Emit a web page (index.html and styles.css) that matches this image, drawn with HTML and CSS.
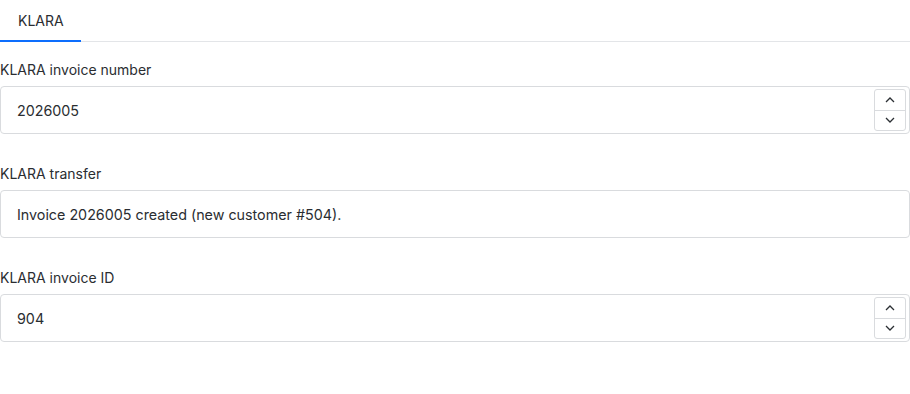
FILE: index.html
```html
<!DOCTYPE html>
<html lang="en">

<head>
    <meta charset="UTF-8" />
    <meta name="viewport" content="width=device-width, initial-scale=1.0" />
    <title>KLARA</title>
    <link rel="stylesheet" href="styles.css">
</head>

<body>
    <div class="tabs">
        <a class="tab active" href="#">KLARA</a>
    </div>

    <div class="field">
        <label for="invoice-number">KLARA invoice number</label>
        <div class="input-box">
            <input id="invoice-number" type="text" value="2026005" readonly>
            <div class="spinner">
                <button class="spin-up" type="button">
                    <svg width="12" height="8" viewBox="0 0 12 8"><path d="M2 6 L6 2 L10 6" /></svg>
                </button>
                <button class="spin-down" type="button">
                    <svg width="12" height="8" viewBox="0 0 12 8"><path d="M2 2 L6 6 L10 2" /></svg>
                </button>
            </div>
        </div>
    </div>

    <div class="field">
        <label for="transfer">KLARA transfer</label>
        <div class="input-box">
            <input id="transfer" type="text" value="Invoice 2026005 created (new customer #504)." readonly>
        </div>
    </div>

    <div class="field">
        <label for="invoice-id">KLARA invoice ID</label>
        <div class="input-box">
            <input id="invoice-id" type="text" value="904" readonly>
            <div class="spinner">
                <button class="spin-up" type="button">
                    <svg width="12" height="8" viewBox="0 0 12 8"><path d="M2 6 L6 2 L10 6" /></svg>
                </button>
                <button class="spin-down" type="button">
                    <svg width="12" height="8" viewBox="0 0 12 8"><path d="M2 2 L6 6 L10 2" /></svg>
                </button>
            </div>
        </div>
    </div>
</body>

</html>
```

FILE: styles.css
```css
body {
    margin: 0;
    background-color: white;
    color: #2a2d31;
    font-family: Inter, "Noto Sans", sans-serif;
    font-size: 14px;
}

.tabs {
    display: flex;
    height: 41px;
    border-bottom: 1px solid #e3e5e8;
}

.tab {
    display: flex;
    align-items: center;
    padding: 0 17px 0 18px;
    margin-bottom: -1px;
    border-bottom: 2px solid #0d6efd;
    color: inherit;
    text-decoration: none;
}

.field {
    margin-top: 18px;
}

.field + .field {
    margin-top: 30px;
}

.field label {
    display: block;
    line-height: 20px;
    margin-bottom: 6px;
}

.input-box {
    display: flex;
    align-items: center;
    height: 46px;
    border: 1px solid #d9dbde;
    border-radius: 4px;
    padding-right: 3px;
}

.input-box input {
    flex: 1;
    min-width: 0;
    height: 100%;
    padding: 0 16px;
    border: none;
    outline: none;
    background: transparent;
    color: inherit;
    font-family: inherit;
    font-size: 14.3px;
}

.spinner {
    display: flex;
    flex-direction: column;
    width: 30px;
    height: 40px;
    border: 1px solid #d9dbde;
    border-radius: 3px;
}

.spinner button {
    flex: 1;
    display: flex;
    align-items: center;
    justify-content: center;
    padding: 0;
    border: none;
    background: transparent;
    cursor: pointer;
}

.spinner .spin-up {
    border-bottom: 1px solid #d9dbde;
}

.spinner svg path {
    fill: none;
    stroke: #2b2f33;
    stroke-width: 1.3;
}
```
